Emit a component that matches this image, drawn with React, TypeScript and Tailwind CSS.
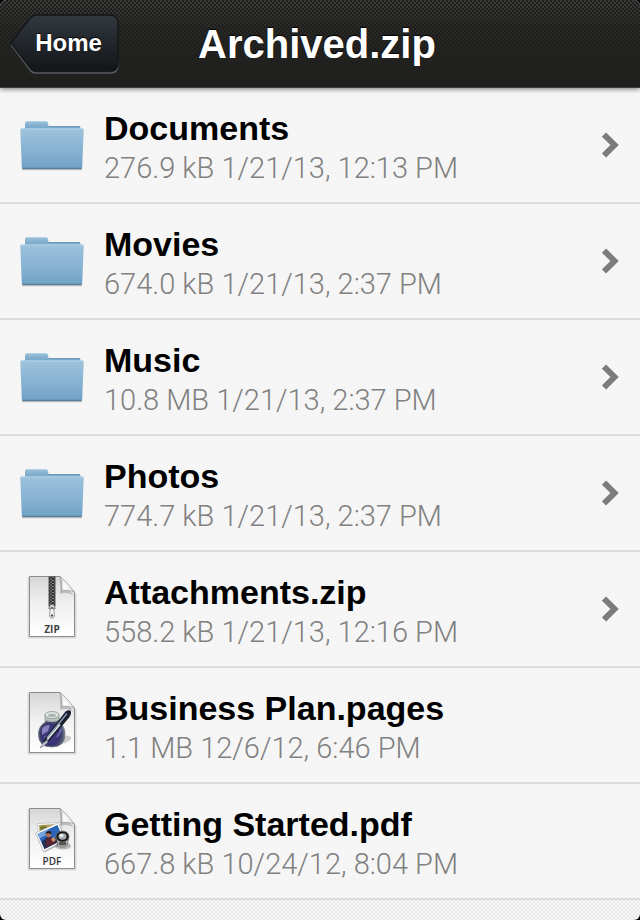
import React from "react";

type Kind = "folder" | "zip" | "pages" | "pdf";

type Entry = {
  name: string;
  size: string;
  date: string;
  kind: Kind;
};

const entries: Entry[] = [
  { name: "Documents", size: "276.9 kB", date: "1/21/13, 12:13 PM", kind: "folder" },
  { name: "Movies", size: "674.0 kB", date: "1/21/13, 2:37 PM", kind: "folder" },
  { name: "Music", size: "10.8 MB", date: "1/21/13, 2:37 PM", kind: "folder" },
  { name: "Photos", size: "774.7 kB", date: "1/21/13, 2:37 PM", kind: "folder" },
  { name: "Attachments.zip", size: "558.2 kB", date: "1/21/13, 12:16 PM", kind: "zip" },
  { name: "Business Plan.pages", size: "1.1 MB", date: "12/6/12, 6:46 PM", kind: "pages" },
  { name: "Getting Started.pdf", size: "667.8 kB", date: "10/24/12, 8:04 PM", kind: "pdf" },
];

// Gradients shared by every icon in the list
function IconDefs() {
  return (
    <svg className="absolute size-0" aria-hidden="true">
      <defs>
        <linearGradient id="folderBack" x1="0" y1="0" x2="0" y2="1">
          <stop offset="0" stopColor="#9cc1da" />
          <stop offset="0.5" stopColor="#7dabcb" />
          <stop offset="1" stopColor="#6f9fc2" />
        </linearGradient>
        <linearGradient id="folderFront" x1="0" y1="0" x2="0" y2="1">
          <stop offset="0" stopColor="#9dc2dc" />
          <stop offset="0.5" stopColor="#8ab4d3" />
          <stop offset="1" stopColor="#6fa1c6" />
        </linearGradient>
        <linearGradient id="paper" x1="0" y1="0" x2="0" y2="1">
          <stop offset="0" stopColor="#d6d6d6" />
          <stop offset="0.45" stopColor="#f0f0f0" />
          <stop offset="1" stopColor="#ffffff" />
        </linearGradient>
        <linearGradient id="fold" x1="0" y1="1" x2="1" y2="0">
          <stop offset="0" stopColor="#b4b4b4" />
          <stop offset="0.3" stopColor="#ffffff" />
          <stop offset="0.6" stopColor="#e4e4e4" />
          <stop offset="1" stopColor="#b8b8b8" />
        </linearGradient>
        <radialGradient id="ink" cx="0.45" cy="0.6" r="0.55">
          <stop offset="0" stopColor="#4a3f92" />
          <stop offset="0.6" stopColor="#39316f" />
          <stop offset="0.85" stopColor="#4d5570" />
          <stop offset="1" stopColor="#7f8894" />
        </radialGradient>
        <pattern id="teeth" width="4" height="3" patternUnits="userSpaceOnUse">
          <rect width="4" height="3" fill="#333333" />
          <path d="M0 0.5h2M2 2h2" stroke="#8c8c8c" strokeWidth="1" />
        </pattern>
      </defs>
    </svg>
  );
}

function FolderIcon() {
  return (
    <>
      <path d="M2 56.5h60" stroke="#000" strokeOpacity="0.25" strokeWidth="1.6" />
      <path d="M5 20V10Q5.500 8 7.500 8H25.500Q27.500 8 28 10L28.500 13H59Q60.500 13 60.500 15V20Z" fill="url(#folderBack)" />
      <path d="M6.500 8.500H26.500" stroke="#b4d2e6" />
      <path d="M29 13.500H60" stroke="#6c9abc" />
      <path
        d="M1.500 15.500H62.500Q63.800 15.500 63.700 17L62.200 54.500Q62 56 60.800 56H3.200Q2 56 1.800 54.500L0.300 17Q0.200 15.500 1.500 15.500Z"
        fill="url(#folderFront)"
      />
      <path d="M1 16H63" stroke="#b5d3e8" />
      <path d="M2.500 55.300H61.500" stroke="#54809f" strokeWidth="1.2" />
    </>
  );
}

function Paper({ children }: { children: React.ReactNode }) {
  return (
    <>
      <path d="M9 0V60H55V16" fill="none" stroke="#000" strokeOpacity="0.12" strokeWidth="3" />
      <path d="M9.500 -0.500H40L54.500 15V59.500H9.500Z" fill="url(#paper)" stroke="#8d8d8d" />
      {children}
      <path d="M39 0Q41 6 40 17Q49 14.500 54 19Z" fill="#000" fillOpacity="0.18" />
      <path d="M40 -0.500Q43 5 41.500 14Q49.500 12 54.500 15.500Q49 6.500 40 -0.500Z" fill="url(#fold)" stroke="#999" strokeWidth="0.7" />
    </>
  );
}

function ZipIcon() {
  return (
    <Paper>
      <rect x="29" y="0" width="6" height="29" fill="url(#teeth)" stroke="#333" strokeWidth="0.8" />
      <path d="M29.500 28.500Q32 26 34.500 28.500L35 32H29Z" fill="#d5d5d5" stroke="#555" strokeWidth="0.8" />
      <path d="M30.500 31h3l1 6.500a2.600 3 0 1 1-5 0Z" fill="#f1f1f1" stroke="#888" strokeWidth="0.8" />
      <circle cx="32" cy="31" r="1" fill="#555" />
      <circle cx="32" cy="38.500" r="1.200" fill="#555" />
      <text x="32" y="56" textAnchor="middle" className="fill-[#3f3f3f] font-['Open_Sans',sans-serif] text-[10px] font-bold">
        ZIP
      </text>
    </Paper>
  );
}

function PagesIcon() {
  return (
    <Paper>
      <path d="M42 51Q52 48 51 44Q48 41 42 44Z" fill="#000" fillOpacity="0.18" />
      <path d="M25.500 23V29Q18.500 33 18.500 41Q18.500 54 31.500 54Q45 54 45 41Q45 33 38.500 29V23Z" fill="url(#ink)" stroke="#6d7680" strokeWidth="0.8" />
      <path d="M25 22v5.500q7 3 14 0V22Z" fill="#b9c2be" stroke="#89918e" strokeWidth="0.7" />
      <ellipse cx="32" cy="22" rx="7" ry="3.500" fill="#dfe4e0" stroke="#8c9592" strokeWidth="0.8" />
      <ellipse cx="32" cy="22.300" rx="4" ry="1.600" fill="#a9b2ae" />
      <path d="M22 36Q24 32 30 32L28 38L22 42Z" fill="#a9a4e0" fillOpacity="0.7" />
      <path d="M24 44q3-3 7-2l-2 6-4-1Z" fill="#8c80d8" fillOpacity="0.7" />
      <path d="M37 44Q40 40 41 36" stroke="#7a70c4" strokeWidth="1.500" fill="none" />
      <path d="M22.500 51L25.500 44L45.500 18.500Q49.500 16 51 18.500Q51.500 21 49.500 24L29.500 48Z" fill="#18202f" />
      <path d="M27 45L47 20.500" stroke="#8d9db5" strokeWidth="1.500" />
      <path d="M27 47L40 31.500" stroke="#e6ebf2" strokeWidth="1.500" />
      <path d="M20 55L23 50L28 46.500L27.500 49.500L23.500 53Z" fill="#c9ccd0" stroke="#62666c" strokeWidth="0.6" />
    </Paper>
  );
}

function PdfIcon() {
  return (
    <Paper>
      <path d="M17.500 14.500L41 13.500L42 31L19 33Z" fill="#fff" stroke="#b5b5b5" strokeWidth="0.7" />
      <path d="M19 16L39.500 15L40 22L20 26Z" fill="#a99b4f" />
      <path d="M20 18l5-1 3 3-7 4Z" fill="#6f7433" />
      <path d="M16 25.500L39 15L46.500 33L24 43.500Z" fill="#000" fillOpacity="0.25" />
      <path d="M15.500 24L38.500 13.500L45.500 31.500L23.500 42.500Z" fill="#fff" stroke="#aaa" strokeWidth="0.6" />
      <path d="M17.500 25L37.500 16L43.500 30.500L24.500 40Z" fill="#2c64b8" />
      <path d="M17.500 25L28 20.200L30 24L19.500 29.500Z" fill="#78a5de" />
      <path d="M21.500 33L27 28L33 30L40 26L43.500 30.500L24.500 40Z" fill="#243152" />
      <path d="M26 38L26.500 30Q29 27 32.500 28.500L36 34Z" fill="#5f2430" />
      <circle cx="28.500" cy="25.500" r="2.600" fill="#a8745a" />
      <path d="M25.300 25Q26 21.500 29.500 22Q31.500 22.500 31.500 25Q28 23.500 25.300 25Z" fill="#241815" />
      <path d="M31 30l3-2 2 3-3 2Z" fill="#c99574" />
      <ellipse cx="43" cy="37" rx="8" ry="3.500" fill="#000" fillOpacity="0.25" />
      <path d="M36.500 28L37.500 36Q42.500 40.500 47.500 36L48.500 28Z" fill="#c8c8c8" stroke="#555" strokeWidth="0.7" />
      <ellipse cx="42.500" cy="34.500" rx="4" ry="2" fill="#555" />
      <ellipse cx="42.500" cy="27.500" rx="6.500" ry="5.500" fill="#161616" stroke="#777" strokeWidth="0.8" />
      <ellipse cx="42.500" cy="27.500" rx="4" ry="3.200" fill="#a6adb3" />
      <ellipse cx="41.500" cy="26.500" rx="2" ry="1.500" fill="#f4f4f4" />
      <text x="32" y="56" textAnchor="middle" className="fill-[#333] font-['Open_Sans',sans-serif] text-[10px] font-semibold">
        PDF
      </text>
    </Paper>
  );
}

const icons = {
  folder: FolderIcon,
  zip: ZipIcon,
  pages: PagesIcon,
  pdf: PdfIcon,
};

function Row({ entry }: { entry: Entry }) {
  const Icon = icons[entry.kind];
  const opens = entry.kind === "folder" || entry.kind === "zip";

  return (
    <li className="border-b-2 border-[#dcdcdc] bg-[#f6f6f6]/85">
      <a href="#" className="flex items-center gap-5 px-5 py-3.5">
        <svg viewBox="0 0 64 64" className="size-16 shrink-0 overflow-visible" aria-hidden="true">
          <Icon />
        </svg>
        <div className="min-w-0 flex-1 pt-1.5">
          <p className="truncate text-[34px] leading-10 font-bold text-black">{entry.name}</p>
          <p className="truncate font-[Roboto,sans-serif] text-[29px] leading-10 font-light text-[#808080]">
            {entry.size} {entry.date}
          </p>
        </div>
        {opens && (
          <svg viewBox="0 0 18 28" className="h-7 w-[18px] shrink-0" aria-hidden="true">
            <path d="M2 3.500L12.500 14L2 24.500" fill="none" stroke="#7c7c7c" strokeWidth="6" />
          </svg>
        )}
      </a>
    </li>
  );
}

function BackButton() {
  return (
    <button type="button" className="relative h-[60px] w-[109px] pb-0.5 pl-2 text-2xl font-bold text-white [text-shadow:0_-1px_1px_#000]">
      <svg viewBox="0 0 108 60" preserveAspectRatio="none" className="absolute inset-0 size-full" aria-hidden="true">
        <defs>
          <linearGradient id="back" x1="0" y1="0" x2="0" y2="1">
            <stop offset="0" stopColor="#333a42" />
            <stop offset="0.5" stopColor="#22272d" />
            <stop offset="1" stopColor="#111518" />
          </linearGradient>
        </defs>
        <path d="M1 30.500L20 56Q22 59 26 59H99Q107 59 107 51V48" fill="none" stroke="#565b60" strokeWidth="1.500" />
        <path
          d="M1 29L20 4Q22.500 1 26 1H99Q107 1 107 9V49Q107 57 99 57H26Q22.500 57 20 54Z"
          fill="url(#back)"
          fillOpacity="0.9"
          stroke="#15181a"
          strokeWidth="1.500"
        />
      </svg>
      <span className="relative">Home</span>
    </button>
  );
}

function App() {
  return (
    <div className="min-h-screen bg-black font-['Liberation_Sans',Arial,sans-serif]">
      <IconDefs />
      <div className="flex min-h-screen flex-col overflow-hidden rounded-md bg-[#fafafa] bg-[linear-gradient(45deg,#0000_38%,#00000014_38%_62%,#0000_62%),linear-gradient(-45deg,#0000_38%,#00000014_38%_62%,#0000_62%)] bg-size-[4px_4px]">
        <header className="relative bg-[repeating-conic-gradient(#1f1f1e_0_25%,#484847_0_50%)] bg-size-[4px_4px] shadow-[0_1px_5px_#00000088]">
          <div className="grid h-[88px] grid-cols-[1fr_auto_1fr] items-center border-b border-[#3b3b3b] bg-[linear-gradient(#1f1f1e55,#1f1f1ecc_35%,#1f1f1e_90%)] pr-4 pl-2.5">
            <BackButton />
            <h1 className="text-[40px] leading-[86px] font-bold text-white [text-shadow:0_-1px_1px_#000]">Archived.zip</h1>
          </div>
        </header>
        <ul>
          {entries.map((entry) => (
            <Row key={entry.name} entry={entry} />
          ))}
        </ul>
      </div>
    </div>
  );
}

export default App;
